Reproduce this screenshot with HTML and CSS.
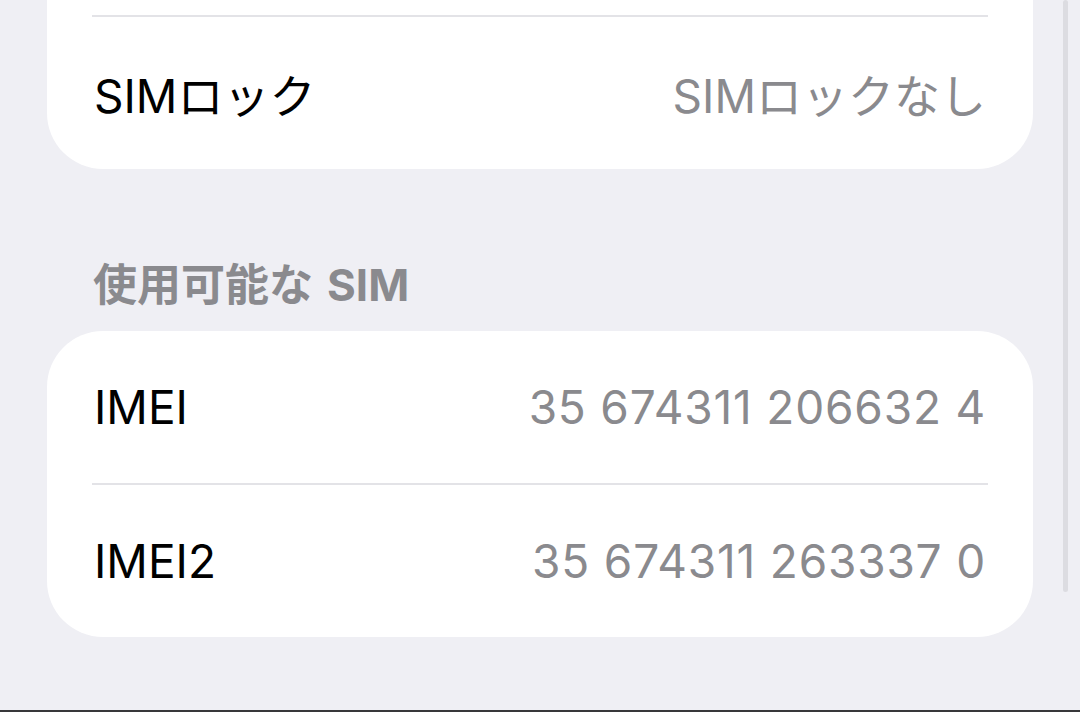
FILE: index.html
```html
<!DOCTYPE html>
<html lang="ja">

<head>
  <title>情報</title>
  <meta charset="UTF-8">
  <meta name="viewport" content="width=device-width, initial-scale=1">
  <link rel="stylesheet" href="styles.css">
</head>

<body>
  <div class="screen">
    <div class="list">
      <div class="card card-top">
        <div class="row"></div>
        <div class="divider"></div>
        <div class="row">
          <span class="label">SIMロック</span>
          <span class="value">SIMロックなし</span>
        </div>
      </div>

      <h2 class="section-title">使用可能な<span class="latin">SIM</span></h2>
      <div class="card">
        <div class="row">
          <span class="label">IMEI</span>
          <span class="value num">35 674311 206632 4</span>
        </div>
        <div class="divider"></div>
        <div class="row">
          <span class="label">IMEI2</span>
          <span class="value num">35 674311 263337 0</span>
        </div>
      </div>
    </div>

    <!-- scroll indicator -->
    <div class="scroll-thumb"></div>
  </div>
</body>

</html>
```

FILE: styles.css
```css
* {
  box-sizing: border-box;
}

body {
  font-family: Inter, "Noto Sans CJK JP", sans-serif;
  margin: 0;
  background-color: #efeff4;
}

/* Whole visible area, with the dark bottom edge */
.screen {
  position: relative;
  height: 712px;
  overflow: hidden;
  border-bottom: 2px solid #38383a;
}

.list {
  padding: 0 47px;
}

/* Grouped cards */
.card {
  background-color: #ffffff;
  border-radius: 56px;
  overflow: hidden;
}

/* list already scrolled: the first row sits above the top */
.card-top {
  margin-top: -137px;
}

.row {
  display: flex;
  justify-content: space-between;
  align-items: center;
  height: 152px;
  padding: 0 47px 0 47px;
  font-size: 46px;
}

.divider {
  height: 2px;
  margin: 0 45px;
  background-color: #e3e3e7;
}

.label {
  color: #000000;
}

.value {
  color: #8a8a8e;
}

/* IMEI digits run a bit wider */
.num {
  letter-spacing: 0.8px;
}

.section-title {
  margin: 0;
  padding: 88px 46px 18px;
  font-size: 44px;
  line-height: 56px;
  font-weight: 700;
  color: #8a8a8e;
}

.section-title .latin {
  margin-left: 14px;
}

.scroll-thumb {
  position: absolute;
  top: 0;
  right: 12px;
  width: 5px;
  height: 592px;
  border-radius: 3px;
  background-color: #dcdce1;
}
```
